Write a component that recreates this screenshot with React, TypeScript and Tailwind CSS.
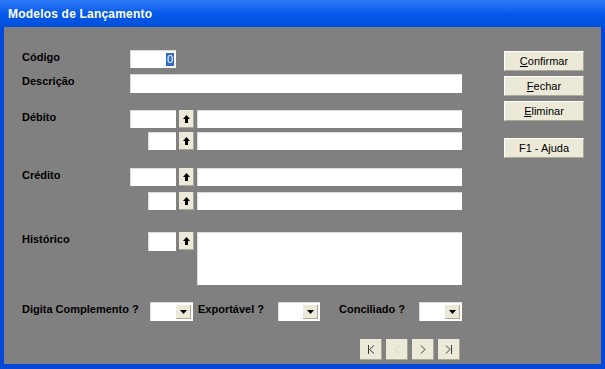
import React from 'react';

const font = { fontFamily: '"Liberation Sans", Arial, sans-serif' };

// campo de texto branco
const Field: React.FC<{ w: string; h?: string; children?: React.ReactNode }> = ({ w, h = 'h-[18px]', children }) => (
  <div className={`${w} ${h} bg-white border-t border-l border-[#dcdcdc] flex items-center justify-end pr-[2px]`}>
    {children}
  </div>
);

const UpButton = () => (
  <div className="w-[15px] h-[18px] bg-[#ece9d8] border-r border-b border-[#aca899] flex items-center justify-center">
    <svg width="7" height="8" viewBox="0 0 7 8">
      <path d="M3.5 0 L7 4 L5 4 L5 8 L2 8 L2 4 L0 4 Z" fill="#000" />
    </svg>
  </div>
);

const Combo: React.FC<{ w: string }> = ({ w }) => (
  <div className={`${w} h-[19px] bg-white border-t border-l border-[#dcdcdc] flex justify-end p-[2px]`}>
    <div className="w-[15px] h-full bg-[#ece9d8] border-r border-b border-[#aca899] flex items-center justify-center">
      <svg width="7" height="4" viewBox="0 0 7 4">
        <path d="M0 0 L7 0 L3.5 4 Z" fill="#000" />
      </svg>
    </div>
  </div>
);

const Label: React.FC<{ children: React.ReactNode; w?: string }> = ({ children, w = 'w-[108px]' }) => (
  <div className={`${w} shrink-0 text-[11px] font-bold text-black leading-[13px] pt-[1px]`}>{children}</div>
);

const SideButton: React.FC<{ first: string; rest: string; mt: string }> = ({ first, rest, mt }) => (
  <div className={`${mt} w-[80px] h-[20px] bg-[#ece9d8] border-r border-b border-[#aca899] border-t border-l border-t-white border-l-white flex items-center justify-center text-[11px] text-black`}>
    <span className="underline">{first}</span>
    <span>{rest}</span>
  </div>
);

const NavButton: React.FC<{ children: React.ReactNode }> = ({ children }) => (
  <div className="w-[22px] h-[21px] bg-[#ece9d8] border-r border-b border-[#aca899] flex items-center justify-center">
    {children}
  </div>
);

export default function App() {
  return (
    <div className="w-[605px] h-[369px] flex flex-col bg-[#0348d8] overflow-hidden" style={font}>
      {/* barra de título */}
      <div className="h-[27px] shrink-0 bg-gradient-to-b from-[#2f7dfa] via-[#0458e8] to-[#0050dc] flex items-center pl-[8px]">
        <span className="text-white font-bold text-[12px] tracking-[0.2px]">Modelos de Lançamento</span>
      </div>

      {/* corpo */}
      <div className="flex-1 min-h-0 ml-[4px] mr-[4px] mb-[5px] bg-[#808080] flex">
        <div className="w-[478px] shrink-0 pl-[18px] flex flex-col">
          {/* Código */}
          <div className="mt-[23px] flex h-[18px]">
            <Label>Código</Label>
            <Field w="w-[46px]">
              <span className="bg-[#316ac5] text-white text-[11px] leading-[13px] px-[1px]">0</span>
            </Field>
          </div>

          {/* Descrição */}
          <div className="mt-[6px] flex h-[19px]">
            <Label>Descrição</Label>
            <Field w="w-[332px]" h="h-[19px]" />
          </div>

          {/* Débito */}
          <div className="mt-[17px] flex h-[18px]">
            <Label>Débito</Label>
            <div className="flex gap-[3px]">
              <Field w="w-[46px]" />
              <UpButton />
              <Field w="w-[265px]" />
            </div>
          </div>
          <div className="mt-[4px] flex h-[18px] pl-[126px] gap-[3px]">
            <Field w="w-[28px]" />
            <UpButton />
            <Field w="w-[265px]" />
          </div>

          {/* Crédito */}
          <div className="mt-[18px] flex h-[18px]">
            <Label>Crédito</Label>
            <div className="flex gap-[3px]">
              <Field w="w-[46px]" />
              <UpButton />
              <Field w="w-[265px]" />
            </div>
          </div>
          <div className="mt-[6px] flex h-[18px] pl-[126px] gap-[3px]">
            <Field w="w-[28px]" />
            <UpButton />
            <Field w="w-[265px]" />
          </div>

          {/* Histórico */}
          <div className="mt-[22px] flex">
            <Label w="w-[126px]">Histórico</Label>
            <div className="flex gap-[3px] items-start">
              <Field w="w-[28px]" h="h-[19px]" />
              <div className="h-[19px] flex"><UpButton /></div>
              <Field w="w-[265px]" h="h-[53px]" />
            </div>
          </div>

          {/* flags */}
          <div className="mt-[17px] flex h-[19px] items-start">
            <Label w="w-[128px]">Digita Complemento ?</Label>
            <Combo w="w-[43px]" />
            <div className="w-[85px] pl-[5px]">
              <Label w="w-auto">Exportável ?</Label>
            </div>
            <Combo w="w-[42px]" />
            <div className="w-[99px] pl-[19px]">
              <Label w="w-auto">Conciliado ?</Label>
            </div>
            <Combo w="w-[43px]" />
          </div>

          {/* navegação */}
          <div className="mt-[18px] flex gap-[4px] pl-[338px]">
            <NavButton>
              <svg width="8" height="9" viewBox="0 0 8 9">
                <path d="M1.5 0 V9 M7 0.5 L2.5 4.5 L7 8.5" stroke="#3a3a3a" strokeWidth="1" fill="none" />
              </svg>
            </NavButton>
            <NavButton>
              <svg width="6" height="9" viewBox="0 0 6 9">
                <path d="M5 0.5 L1 4.5 L5 8.5" stroke="#d2cfc2" strokeWidth="1" fill="none" />
              </svg>
            </NavButton>
            <NavButton>
              <svg width="6" height="9" viewBox="0 0 6 9">
                <path d="M1 0.5 L5 4.5 L1 8.5" stroke="#3a3a3a" strokeWidth="1" fill="none" />
              </svg>
            </NavButton>
            <NavButton>
              <svg width="8" height="9" viewBox="0 0 8 9">
                <path d="M1 0.5 L5 4.5 L1 8.5 M6.5 0 V9" stroke="#3a3a3a" strokeWidth="1" fill="none" />
              </svg>
            </NavButton>
          </div>
        </div>

        {/* botões laterais */}
        <div className="pl-[22px] pt-[24px] flex flex-col">
          <SideButton mt="mt-0" first="C" rest="onfirmar" />
          <SideButton mt="mt-[5px]" first="F" rest="echar" />
          <SideButton mt="mt-[5px]" first="E" rest="liminar" />
          <SideButton mt="mt-[17px]" first="" rest="F1 - Ajuda" />
        </div>
      </div>
    </div>
  );
}
